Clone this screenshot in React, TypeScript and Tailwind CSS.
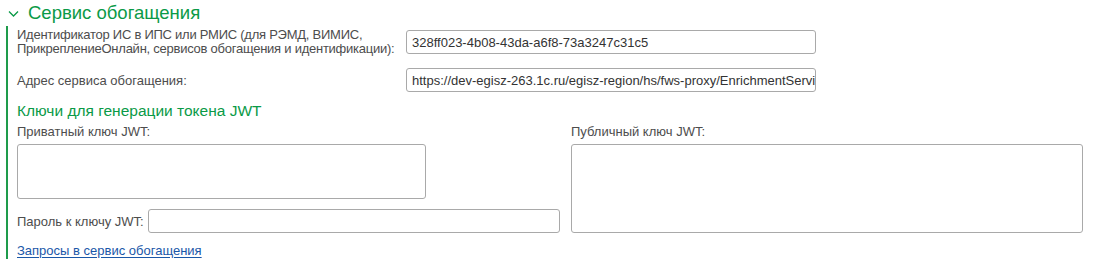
import type { ReactElement } from "react";

const FONT = { fontFamily: '"Liberation Sans", Arial, sans-serif' };

function Field({ value, className }: { value?: string; className: string }): ReactElement {
  return (
    <div
      className={`flex h-6 items-center overflow-hidden whitespace-nowrap rounded-[3px] border border-[#a9a9a9] bg-white px-[5px] text-[13px] text-[#333] ${className}`}
    >
      {value}
    </div>
  );
}

export default function App(): ReactElement {
  return (
    <div className="h-[274px] w-[1093px] bg-white text-[13px] leading-[15px] text-[#4d4d4d]" style={FONT}>
      {/* group title */}
      <div className="flex h-[26px] items-center pl-[8px]">
        <svg width="11" height="8" viewBox="0 0 11 8" className="mr-[9px] mt-[2px]">
          <path d="M1 1.5 L5.5 6 L10 1.5" fill="none" stroke="#0a9a47" strokeWidth="1.3" />
        </svg>
        <span className="text-[18.5px] leading-[22px] text-[#0a9a47]">Сервис обогащения</span>
      </div>

      <div className="ml-[6px] flex flex-col border-l-2 border-[#1e9b4b] pb-[1px] pl-[9px]">
        <div className="flex h-[28px] items-start pt-[4px]">
          <div className="-mt-[2px] w-[389px] whitespace-nowrap leading-[14px] tracking-[-0.25px]">
            Идентификатор ИС в ИПС или РМИС (для РЭМД, ВИМИС,
            <br />
            ПрикреплениеОнлайн, сервисов обогащения и идентификации):
          </div>
          <Field className="w-[410px]" value="328ff023-4b08-43da-a6f8-73a3247c31c5" />
        </div>

        <div className="mt-[14px] flex items-center">
          <div className="w-[389px]">Адрес сервиса обогащения:</div>
          <Field
            className="w-[410px]"
            value="https://dev-egisz-263.1c.ru/egisz-region/hs/fws-proxy/EnrichmentService"
          />
        </div>

        <div className="mt-[9px] text-[15.5px] leading-[19px] text-[#0a9a47]">Ключи для генерации токена JWT</div>

        <div className="mt-[4px] flex gap-[11px]">
          <div className="flex w-[543px] flex-col">
            <div className="leading-[15px]">Приватный ключ JWT:</div>
            <div className="mt-[5px] h-[55px] w-[409px] rounded-[3px] border border-[#a9a9a9]" />
            <div className="mt-[10px] flex items-center gap-[4px]">
              <span>Пароль к ключу JWT:</span>
              <Field className="flex-1" />
            </div>
            <a href="#" className="mt-[10px] w-fit text-[#1a57a8] underline underline-offset-2">
              Запросы в сервис обогащения
            </a>
          </div>
          <div className="flex w-[512px] flex-col">
            <div className="leading-[15px]">Публичный ключ JWT:</div>
            <div className="mt-[5px] h-[89px] rounded-[3px] border border-[#a9a9a9]" />
          </div>
        </div>
      </div>
    </div>
  );
}
